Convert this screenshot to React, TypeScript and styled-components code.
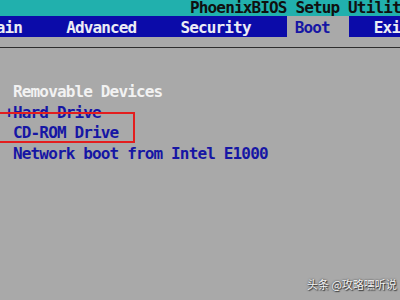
import React from "react";
import styled, { createGlobalStyle } from "styled-components";

const Global = createGlobalStyle`
  html, body { margin: 0; padding: 0; background: #a8a8a8; }
  #root { width: 400px; height: 300px; }
`;

const MONO = `"DejaVu Sans Mono", "Liberation Mono", monospace`;

const Screen = styled.div`
  position: relative;
  width: 400px;
  height: 300px;
  overflow: hidden;
  background: #a9a9a9;
  font-family: ${MONO};
  font-weight: bold;
  font-size: 16px;
  letter-spacing: -0.85px;
  white-space: nowrap;
`;

const TitleBar = styled.div`
  height: 16px;
  line-height: 16px;
  background: #21b0ad;
  color: #101010;
  padding-left: 190px;
  overflow: hidden;
`;

const MenuBar = styled.div`
  display: flex;
  gap: 17px;
  height: 21px;
  background: #0b0ba9;
  margin-left: -21px;
`;

const Tab = styled.div<{ $active?: boolean }>`
  line-height: 23px;
  padding: 0 19px 0 8px;
  color: ${(p) => (p.$active ? "#1616a4" : "#ececf4")};
  background: ${(p) => (p.$active ? "#a9a9a9" : "transparent")};
`;

const Rule = styled.div`
  margin-top: 10px;
  height: 1px;
  background: #2e2e2e;
`;

const List = styled.div`
  padding: 34px 0 0 13px;
  display: flex;
  flex-direction: column;
`;

const Item = styled.div<{ $head?: boolean }>`
  line-height: 20.7px;
  color: ${(p) => (p.$head ? "#f2f2f2" : "#1616a4")};
`;

const Expand = styled.span`
  margin-left: -8.8px;
`;

const Highlight = styled.div`
  position: absolute;
  left: -6px;
  top: 112px;
  width: 137px;
  height: 27px;
  border: 2px solid #e31e1e;
`;

const Watermark = styled.div`
  position: absolute;
  left: 307px;
  top: 276px;
  font-family: "Noto Sans CJK SC", "Noto Sans", sans-serif;
  font-weight: normal;
  font-size: 11px;
  letter-spacing: 0;
  color: #f4f4f4;
  text-shadow: 0 0 2px #333, 1px 1px 1px #333;
`;

export default function App() {
  const tabs = ["Main", "Advanced", "Security", "Boot", "Exit"];
  return (
    <>
      <Global />
      <Screen>
        <TitleBar>PhoenixBIOS Setup Utility</TitleBar>
        <MenuBar>
          {tabs.map((t) => (
            <Tab key={t} $active={t === "Boot"}>
              {t}
            </Tab>
          ))}
        </MenuBar>
        <Rule />
        <List>
          <Item $head>Removable Devices</Item>
          <Item>
            <Expand>+</Expand>Hard Drive
          </Item>
          <Item>CD-ROM Drive</Item>
          <Item>Network boot from Intel E1000</Item>
        </List>
        <Highlight />
        <Watermark>头条 @攻略嘿听说</Watermark>
      </Screen>
    </>
  );
}
